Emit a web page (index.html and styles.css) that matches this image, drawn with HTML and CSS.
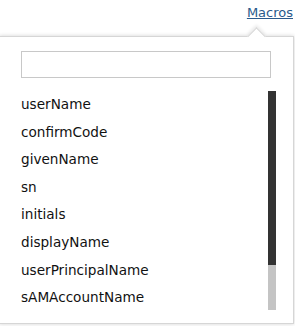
FILE: index.html
```html
<!DOCTYPE html>
<html lang="en">
<head>
    <meta charset="UTF-8">
    <meta name="viewport" content="width=device-width, initial-scale=1.0">
    <title>Macros</title>
    <link rel="stylesheet" href="styles.css">
</head>
<body>

    <!-- Link that opens the picker -->
    <div class="toolbar">
        <a href="#" class="macros-link">Macros</a>
    </div>

    <!-- Macro picker popover -->
    <div class="popover">
        <input type="text" class="macro-search">

        <div class="macro-body">
            <ul class="macro-list">
                <li>userName</li>
                <li>confirmCode</li>
                <li>givenName</li>
                <li>sn</li>
                <li>initials</li>
                <li>displayName</li>
                <li>userPrincipalName</li>
                <li>sAMAccountName</li>
            </ul>
            <div class="scroll-track">
                <div class="scroll-thumb"></div>
            </div>
        </div>
    </div>

</body>
</html>
```

FILE: styles.css
```css
* {
    margin: 0;
    padding: 0;
    box-sizing: border-box;
}

body, html {
    height: 100%;
    background-color: #fff;
    font-family: "DejaVu Sans", Verdana, sans-serif;
    overflow: hidden;
}

/* Top row with the link */
.toolbar {
    display: flex;
    justify-content: flex-end;
    height: 36px;
    padding: 4px 2px 0 0;
}

.macros-link {
    font-size: 13px;
    line-height: 17px;
    color: #2a5a8c;
    text-decoration: underline;
}

/* Popover box */
.popover {
    position: relative;
    margin-left: -1px;
    width: 295px;
    height: 288px;
    border: 1px solid #d6d6d6;
    box-shadow: 0 0 4px rgba(0, 0, 0, 0.18);
    background-color: #fff;
    padding: 14px 22px 12px 21px;
}

/* Arrow pointing at the link */
.popover::before {
    content: "";
    position: absolute;
    top: -7px;
    left: 250px;
    width: 12px;
    height: 12px;
    background-color: #fff;
    border-top: 1px solid #d6d6d6;
    border-left: 1px solid #d6d6d6;
    box-shadow: -2px -2px 3px rgba(0, 0, 0, 0.08);
    transform: rotate(45deg);
}

.macro-search {
    display: block;
    width: 250px;
    height: 27px;
    border: 1px solid #c8c8c8;
    outline: none;
}

.macro-body {
    display: flex;
    margin-top: 13px;
    height: 219px;
    width: 255px;
}

.macro-list {
    list-style: none;
    flex: 1;
    overflow: hidden;
    font-size: 13.6px;
    line-height: 27.6px;
    color: #111;
}

/* Fake scrollbar */
.scroll-track {
    width: 8px;
    height: 100%;
    background-color: #c4c4c4;
}

.scroll-thumb {
    height: 174px;
    background-color: #333;
}
```
